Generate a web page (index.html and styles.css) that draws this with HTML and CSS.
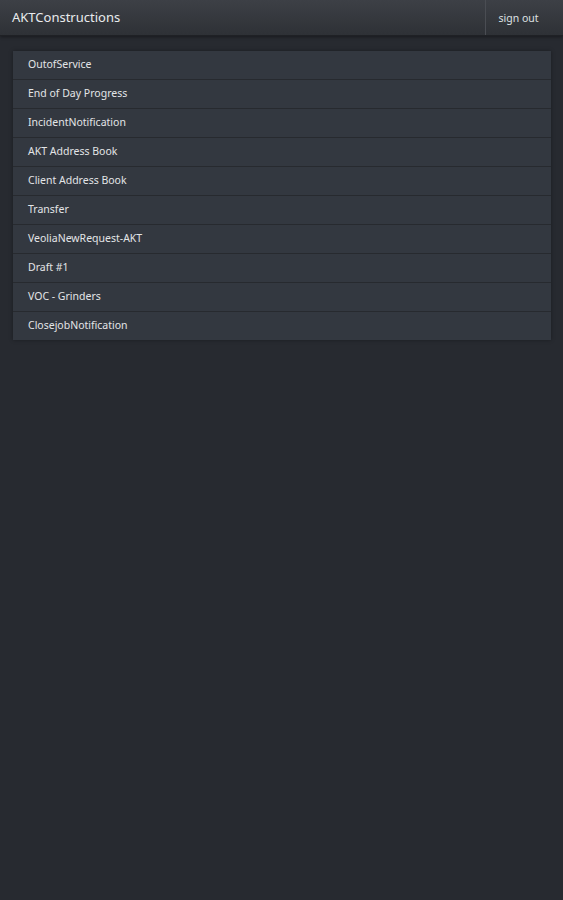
FILE: index.html
```html
<!DOCTYPE html>
<html lang="en">

<head>
    <meta charset="UTF-8">
    <meta name="viewport" content="width=device-width, initial-scale=1.0">
    <title>AKTConstructions</title>
    <link rel="stylesheet" href="styles.css">
</head>

<body>
    <div class="header">
        <h1 class="title">AKTConstructions</h1>
        <a class="signout" href="#">sign out</a>
    </div>

    <div class="content">
        <ul class="forms">
            <li><a href="#">OutofService</a></li>
            <li><a href="#">End of Day Progress</a></li>
            <li><a href="#">IncidentNotification</a></li>
            <li><a href="#">AKT Address Book</a></li>
            <li><a href="#">Client Address Book</a></li>
            <li><a href="#">Transfer</a></li>
            <li><a href="#">VeoliaNewRequest-AKT</a></li>
            <li><a href="#">Draft #1</a></li>
            <li><a href="#">VOC - Grinders</a></li>
            <li><a href="#">ClosejobNotification</a></li>
        </ul>
    </div>
</body>

</html>
```

FILE: styles.css
```css
* {
    margin: 0;
    padding: 0;
}

html,
body {
    height: 100%;
}

body {
    background-color: #272a30;
    font-family: "Noto Sans", "Open Sans", sans-serif;
    color: #e6e8ea;
}

.header {
    display: flex;
    height: 35px;
    background: linear-gradient(#3d4046, #2e3136);
    border-bottom: 1px solid #1f2125;
    box-shadow: 0 1px 3px rgba(0, 0, 0, 0.4);
}

.title {
    flex: 1;
    font-size: 13px;
    font-weight: normal;
    line-height: 35px;
    padding-left: 12px;
    color: #e9ebed;
}

.signout {
    width: 65px;
    margin-right: 12px;
    border-left: 1px solid #4a4d53;
    font-size: 10.5px;
    line-height: 36px;
    text-align: center;
    color: #dfe1e3;
    text-decoration: none;
}

.content {
    padding: 15px 12px 0 13px;
}

.forms {
    list-style: none;
    box-shadow: 0 0 4px rgba(0, 0, 0, 0.35);
}

.forms li {
    background-color: #333840;
    border-bottom: 1px solid #272a2f;
}

.forms li:last-child {
    border-bottom: 0;
}

.forms a {
    display: block;
    height: 28px;
    line-height: 27px;
    padding-left: 15px;
    font-size: 10.5px;
    color: #e3e5e7;
    text-decoration: none;
}
```
